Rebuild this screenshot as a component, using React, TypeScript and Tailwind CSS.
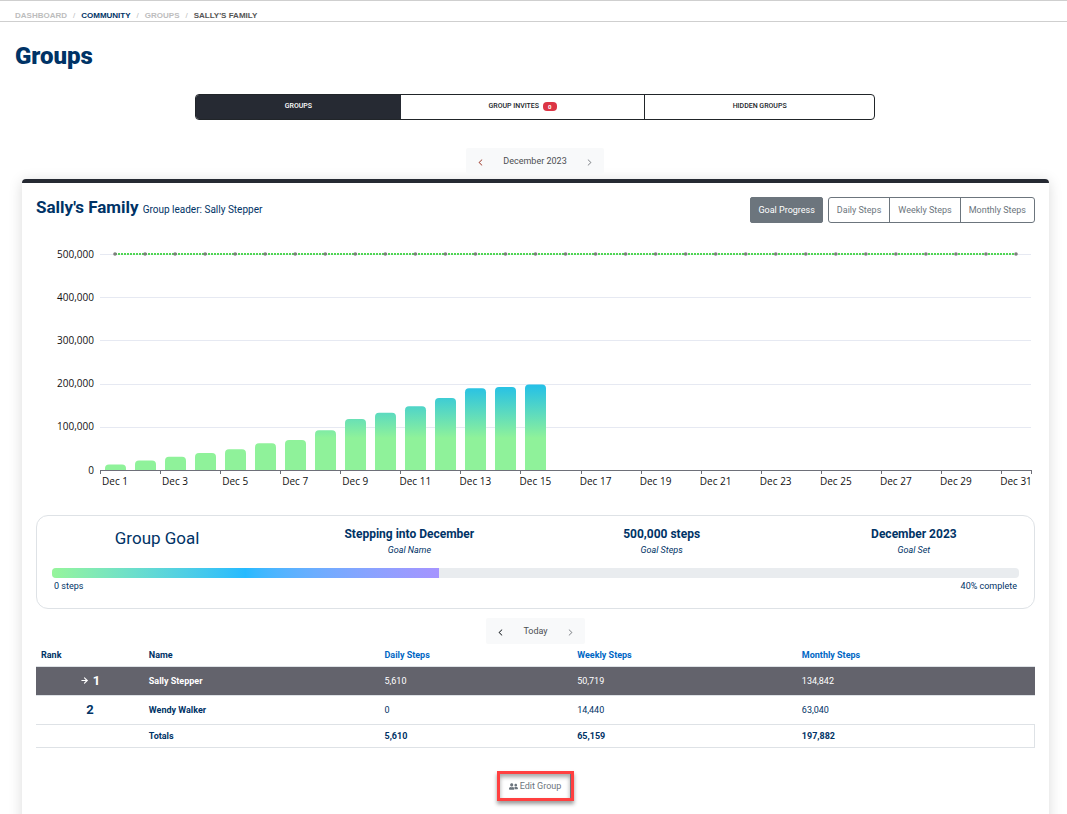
import { useState } from 'react';
import { BsChevronLeft, BsChevronRight } from 'react-icons/bs';
import { FaUserFriends } from 'react-icons/fa';
import { ArrowRight } from 'lucide-react';

interface Member {
  rank: number;
  name: string;
  daily: string;
  weekly: string;
  monthly: string;
  isCurrent?: boolean;
}

const GOAL = 500000;
const DAYS = 31;
const PERCENT_COMPLETE = 40;

const dailyTotals = [
  12500, 22000, 30500, 39500, 48000, 62000, 69500, 92000, 118000, 132500, 147500, 166500, 189500, 192000, 197882,
];

const members: Member[] = [
  { rank: 1, name: 'Sally Stepper', daily: '5,610', weekly: '50,719', monthly: '134,842', isCurrent: true },
  { rank: 2, name: 'Wendy Walker', daily: '0', weekly: '14,440', monthly: '63,040' },
];

const goalDetails = [
  { value: 'Stepping into December', label: 'Goal Name' },
  { value: '500,000 steps', label: 'Goal Steps' },
  { value: 'December 2023', label: 'Goal Set' },
];

const stepViews = ['Daily Steps', 'Weekly Steps', 'Monthly Steps'];

function Breadcrumbs() {
  return (
    <nav className="flex h-[22px] items-end gap-[6px] border-y border-[#cfcfcf] px-[15px] font-['Liberation_Sans',sans-serif] text-[8px] leading-[10px] font-bold">
      <a href="#dashboard" className="text-[#bdbdbd]">DASHBOARD</a>
      <span className="font-normal text-[#bdbdbd]">/</span>
      <a href="#community" className="text-[#003366]">COMMUNITY</a>
      <span className="font-normal text-[#bdbdbd]">/</span>
      <a href="#groups" className="text-[#bdbdbd]">GROUPS</a>
      <span className="font-normal text-[#bdbdbd]">/</span>
      <span className="text-[#555]">SALLY'S FAMILY</span>
    </nav>
  );
}

function PeriodNav({ label, accent }: { label: string; accent?: boolean }) {
  return (
    <div className="flex h-[26px] items-center rounded-xs bg-[#f8f9fa] pt-[2px] text-[9px] text-[#4d4f52]">
      <button aria-label="Previous" className={`flex h-full w-[29px] items-center justify-center ${accent ? 'text-[#a5493c]' : 'text-[#212529]'}`}>
        <BsChevronLeft className="size-[7px]" strokeWidth={1} />
      </button>
      <span className="px-2">{label}</span>
      <button aria-label="Next" className="flex h-full w-[29px] items-center justify-center text-[#8b8f93]">
        <BsChevronRight className="size-[7px]" strokeWidth={1} />
      </button>
    </div>
  );
}

function StepsChart() {
  const left = 64;
  const right = 995;
  const top = 18;
  const bottom = 234;
  const slot = (right - left) / DAYS;
  const y = (value: number) => bottom - (value / GOAL) * (bottom - top);
  const center = (day: number) => left + slot * (day - 0.5);
  const days = Array.from({ length: DAYS }, (_, i) => i + 1);

  return (
    <svg viewBox="0 0 999 260" className="block w-full font-['Open_Sans',sans-serif] text-[10px]" role="img" aria-label="Goal progress">
      <defs>
        <linearGradient id="bar" gradientUnits="userSpaceOnUse" x1="0" y1="202" x2="0" y2="150">
          <stop offset="0" stopColor="#8ff29a" />
          <stop offset="1" stopColor="#26c1e6" />
        </linearGradient>
      </defs>
      {[0, 100000, 200000, 300000, 400000, 500000].map(v => (
        <g key={v}>
          {v > 0 && <line x1={left} x2={right} y1={Math.round(y(v)) + 0.5} y2={Math.round(y(v)) + 0.5} stroke="#e6e9f2" />}
          <text x="58" y={Math.floor(y(v)) + 4} textAnchor="end" fill="#111">{v.toLocaleString('en-US')}</text>
        </g>
      ))}
      {dailyTotals.map((total, i) => {
        const x = Math.round(center(i + 1) - 10.5);
        const t = y(total);
        return <path key={i} d={`M${x} ${bottom}V${t + 4}q0 -4 4 -4h13q4 0 4 4V${bottom}z`} fill="url(#bar)" />;
      })}
      <line x1={left} x2={right} y1="234.5" y2="234.5" stroke="#6e7079" />
      {days.filter(d => d % 2 === 1).map(d => (
        <g key={d}>
          <line x1={Math.round(left + slot * (d - 1)) + 0.5} x2={Math.round(left + slot * (d - 1)) + 0.5} y1="234" y2="238" stroke="#6e7079" />
          <text x={center(d)} y="249" textAnchor="middle" fill="#111">Dec {d}</text>
        </g>
      ))}
      <line x1={right + 0.5} x2={right + 0.5} y1="234" y2="238" stroke="#6e7079" />
      <line x1={center(1)} x2={center(DAYS)} y1={top} y2={top} stroke="#4fd653" strokeWidth="2" strokeDasharray="2 1" />
      {days.map(d => <circle key={d} cx={center(d)} cy={top} r="1.8" fill="#7d7d7d" />)}
    </svg>
  );
}

function GoalPanel() {
  return (
    <section className="mt-[19px] h-[94px] rounded-xl border border-[#dee2e6] px-[15px] pt-[9px]">
      <div className="-mx-[21px] grid grid-cols-4 text-center">
        <h3 className="text-[17px] leading-[26px]">Group Goal</h3>
        {goalDetails.map(detail => (
          <div key={detail.label}>
            <p className="text-[12px] leading-[18px] font-bold">{detail.value}</p>
            <p className="text-[9px] leading-[14px] italic">{detail.label}</p>
          </div>
        ))}
      </div>
      <div className="mt-[11px] h-[10px] overflow-hidden rounded bg-[#e9ecef]">
        <div
          className="h-full bg-linear-to-r from-[#96f59a] via-[#26baff] to-[#a594ff]"
          style={{ width: `${PERCENT_COMPLETE}%` }}
        />
      </div>
      <div className="flex justify-between px-[2px] text-[9px] leading-4">
        <span>0 steps</span>
        <span>{PERCENT_COMPLETE}% complete</span>
      </div>
    </section>
  );
}

function MembersTable() {
  return (
    <table className="w-full table-fixed border-collapse text-left text-[9px] leading-[14px]">
      <colgroup>
        <col className="w-[10.8%]" />
        <col className="w-[23.6%]" />
        <col className="w-[19.3%]" />
        <col className="w-[22.5%]" />
        <col />
      </colgroup>
      <thead>
        <tr className="h-[22px] border-b border-[#dee2e6]">
          <th className="px-[5px]">Rank</th>
          <th className="px-[5px]">Name</th>
          {stepViews.map(view => (
            <th key={view} className="px-[5px]"><a href="#sort" className="text-[#0067c5]">{view}</a></th>
          ))}
        </tr>
      </thead>
      <tbody>
        {members.map(m => (
          <tr key={m.rank} className={m.isCurrent ? 'h-[29px] border-b border-[#dee2e6] bg-[#63636c] text-white' : 'h-[29px] border-b border-[#dee2e6]'}>
            <td className="px-[5px] text-[13px] font-bold">
              <span className="flex items-center justify-center gap-1">
                {m.isCurrent && <ArrowRight className="size-[9px]" strokeWidth={3} />}
                {m.rank}
              </span>
            </td>
            <td className="px-[5px] font-bold">{m.name}</td>
            <td className="px-[5px]">{m.daily}</td>
            <td className="px-[5px]">{m.weekly}</td>
            <td className="px-[5px]">{m.monthly}</td>
          </tr>
        ))}
        <tr className="h-[23px] border-r border-b border-[#dee2e6] font-bold">
          <td></td>
          <td className="px-[5px]">Totals</td>
          <td className="px-[5px]">5,610</td>
          <td className="px-[5px]">65,159</td>
          <td className="px-[5px]">197,882</td>
        </tr>
      </tbody>
    </table>
  );
}

export default function App() {
  const [view, setView] = useState('Goal Progress');

  return (
    <div className="h-screen overflow-hidden bg-white font-[Roboto,sans-serif] text-[#003366]">
      <Breadcrumbs />
      <main>
        <h1 className="px-[15px] pt-[18px] text-[24px] leading-8 font-black">Groups</h1>

        <div className="ml-[3px]">
          <div className="mx-auto mt-[22px] grid h-[26px] w-[64%] grid-cols-[206fr_244fr_230fr] overflow-hidden rounded border border-[#212529] text-[7px] font-medium text-[#212529]">
            <button className="bg-[#262a33] pb-[2px] text-white">GROUPS</button>
            <button className="flex items-center justify-center gap-1 border-r border-[#212529] pb-[2px]">
              GROUP INVITES
              <span className="rounded bg-[#dc3545] px-[5px] text-[6px] leading-[9px] font-bold text-white">0</span>
            </button>
            <button className="pb-[2px]">HIDDEN GROUPS</button>
          </div>

          <div className="mt-[28px] flex justify-center">
            <PeriodNav label="December 2023" accent />
          </div>
        </div>

        <section className="mt-[5px] mr-[18px] ml-[22px] min-h-[660px] rounded border-t-4 border-[#262a33] px-[14px] pt-[14px] shadow-[0_2px_14px_rgba(0,0,0,0.15)]">
          <div className="flex items-start justify-between">
            <div className="flex items-baseline gap-1">
              <h2 className="text-[17px] leading-5 font-bold">Sally's Family</h2>
              <span className="text-[10px]">Group leader: Sally Stepper</span>
            </div>
            <div className="flex h-[26px] gap-[5px] text-[9px] text-[#6c757d]">
              <button onClick={() => setView('Goal Progress')} className={`rounded-xs border border-[#6c757d] px-[7px] pt-[2px] ${view === 'Goal Progress' ? 'bg-[#6c757d] text-white' : ''}`}>Goal Progress</button>
              <div className="flex divide-x divide-[#6c757d] overflow-hidden rounded-[3px] border border-[#6c757d]">
                {stepViews.map(name => (
                  <button key={name} onClick={() => setView(name)} className={`px-2 pt-[2px] ${view === name ? 'bg-[#6c757d] text-white' : ''}`}>{name}</button>
                ))}
              </div>
            </div>
          </div>

          <div className="mt-[13px]">
            <StepsChart />
          </div>

          <GoalPanel />

          <div className="mt-[9px] flex justify-center">
            <PeriodNav label="Today" />
          </div>
          <MembersTable />

          <div className="mt-[23px] flex justify-center">
            <div className="border-3 border-[#ff4040] shadow-[0_3px_4px_rgba(0,0,0,0.4)]">
              <button className="flex h-[24px] items-center gap-[2px] border-r border-[#6c757d] px-[9px] pt-[2px] text-[9px] text-[#6c757d] shadow-[inset_0_3px_4px_rgba(0,0,0,0.35)]">
                <FaUserFriends className="size-[9px]" />
                Edit Group
              </button>
            </div>
          </div>
        </section>
      </main>
    </div>
  );
}
